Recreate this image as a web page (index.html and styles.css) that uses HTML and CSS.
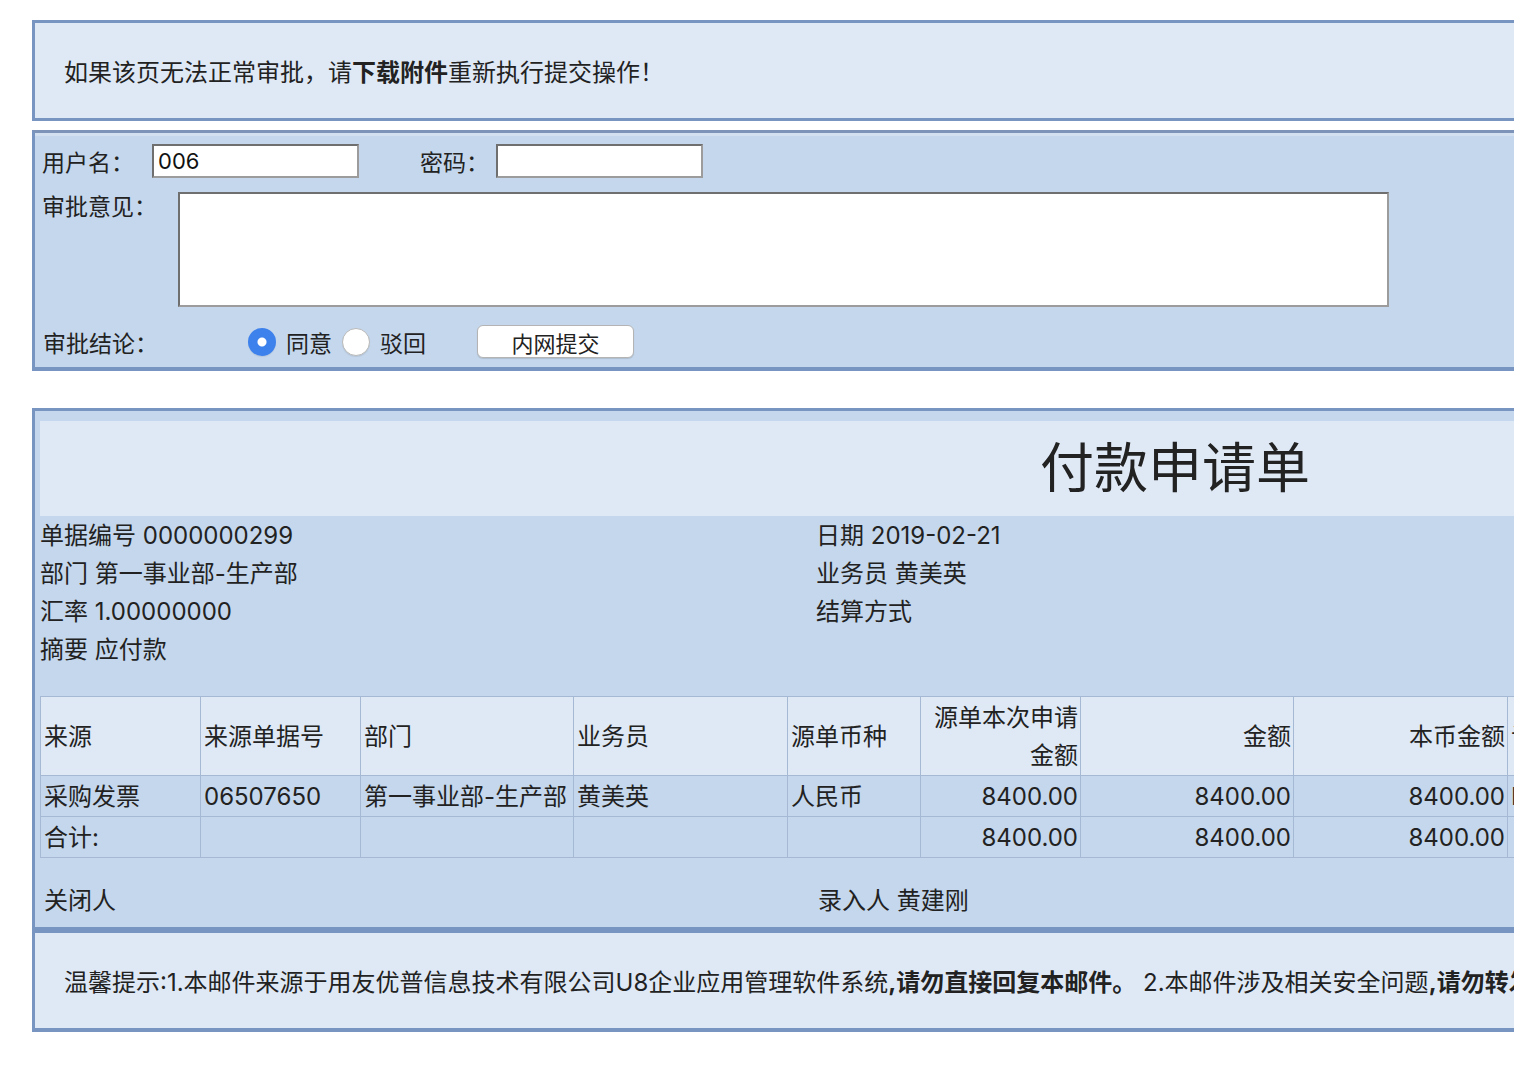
FILE: index.html
```html
<!DOCTYPE html>
<html lang="zh-CN">
<head>
<meta charset="utf-8">
<title>付款申请单</title>
<link rel="stylesheet" href="styles.css">
</head>
<body>
<div class="page">
  <div class="box notice">如果该页无法正常审批，请<b>下载附件</b>重新执行提交操作！</div>

  <div class="box form">
    <div class="row r1">
      <span class="lbl lbl-user">用户名：</span>
      <input class="inp" type="text" value="006">
      <span class="lbl lbl-pw">密码：</span>
      <input class="inp" type="password" value="">
    </div>
    <div class="row r2">
      <span class="lbl lbl-op">审批意见：</span>
      <textarea class="opinion"></textarea>
    </div>
    <div class="row r3">
      <span class="lbl lbl-res">审批结论：</span>
      <input class="radio" type="radio" name="res" checked>
      <span class="rtext">同意</span>
      <input class="radio" type="radio" name="res">
      <span class="rtext">驳回</span>
      <button class="btn" type="button">内网提交</button>
    </div>
  </div>

  <div class="box bill">
    <div class="title">付款申请单</div>
    <div class="info">
      <div>单据编号 0000000299</div><div>日期 2019-02-21</div>
      <div>部门 第一事业部-生产部</div><div>业务员 黄美英</div>
      <div>汇率 1.00000000</div><div>结算方式</div>
      <div>摘要 应付款</div><div></div>
    </div>
    <table class="grid">
      <colgroup>
        <col style="width:160px"><col style="width:160px"><col style="width:213px"><col style="width:214px">
        <col style="width:133px"><col style="width:160px"><col style="width:213px"><col style="width:214px">
        <col style="width:200px"><col style="width:200px">
      </colgroup>
      <thead>
        <tr>
          <th>来源</th><th>来源单据号</th><th>部门</th><th>业务员</th><th>源单币种</th>
          <th class="num">源单本次申请金额</th><th class="num">金额</th><th class="num">本币金额</th>
          <th>订单号</th><th>项目</th>
        </tr>
      </thead>
      <tbody>
        <tr>
          <td>采购发票</td><td>06507650</td><td>第一事业部-生产部</td><td>黄美英</td><td>人民币</td>
          <td class="num">8400.00</td><td class="num">8400.00</td><td class="num">8400.00</td>
          <td>P0000123</td><td></td>
        </tr>
        <tr>
          <td>合计:</td><td></td><td></td><td></td><td></td>
          <td class="num">8400.00</td><td class="num">8400.00</td><td class="num">8400.00</td>
          <td></td><td></td>
        </tr>
      </tbody>
    </table>
    <div class="info info-foot">
      <div>关闭人</div><div>录入人 黄建刚</div>
    </div>
  </div>

  <div class="box tip">温馨提示:1.本邮件来源于用友优普信息技术有限公司U8企业应用管理软件系统<b>,请勿直接回复本邮件。</b>&nbsp;2.本邮件涉及相关安全问题<b>,请勿转发本邮件。</b></div>
</div>
</body>
</html>
```

FILE: styles.css
```css
html {
  overflow: hidden;
}

body {
  margin: 0;
  background: #ffffff;
  color: #222222;
  font-family: "Inter", "Noto Sans CJK SC", sans-serif;
}

.page {
  padding: 20px 0 0 32px;
  width: 2286px;
}

.box {
  box-sizing: border-box;
  width: 2286px;
  border: 3px solid #7894c0;
}

/* notice */
.notice {
  height: 101px;
  background: #dfe9f6;
  display: flex;
  align-items: center;
  padding-left: 29px;
  font-size: 24px;
  white-space: nowrap;
}

/* login / approval form */
.form {
  margin-top: 9px;
  background: #c5d7ec;
  border-bottom-width: 4px;
  border-top-color: #7d94b8;
  padding: 11px 0 9px 7px;
  font-size: 23px;
  box-shadow: inset 0 3px 0 #d3e0f0;
}

.row {
  display: flex;
  align-items: center;
}

.r1 {
  height: 34px;
}

.lbl {
  flex: none;
  white-space: nowrap;
}

.lbl-user {
  width: 110px;
}

.lbl-pw {
  width: 76px;
  margin-left: 61px;
}

.inp {
  box-sizing: border-box;
  width: 207px;
  height: 34px;
  margin: 0;
  padding: 0 4px;
  border: 2px solid;
  border-color: #6f6f6f #9c9c9c #9c9c9c #6f6f6f;
  background: #ffffff;
  font-family: "Inter", "Noto Sans CJK SC", sans-serif;
  font-size: 22px;
  color: #111111;
}

.r2 {
  margin-top: 14px;
  align-items: flex-start;
}

.lbl-op {
  width: 136px;
  line-height: 30px;
}

.opinion {
  box-sizing: border-box;
  width: 1211px;
  height: 115px;
  margin: 0;
  border: 2px solid;
  border-color: #6f6f6f #9c9c9c #9c9c9c #6f6f6f;
  background: #ffffff;
  resize: none;
}

.r3 {
  margin-top: 18px;
  height: 33px;
}

.lbl-res {
  box-sizing: border-box;
  width: 206px;
  padding-left: 1px;
  padding-top: 1px;
}

.radio {
  appearance: none;
  -webkit-appearance: none;
  flex: none;
  box-sizing: border-box;
  width: 28px;
  height: 28px;
  margin: 0;
  border-radius: 50%;
  border: 1px solid #b9b9b9;
  background: #ffffff;
  box-shadow: 0 1px 1px rgba(0, 0, 0, 0.08);
}

.radio:checked {
  border: none;
  background: radial-gradient(circle, #ffffff 0 4px, #3d81ec 5px);
}

.rtext {
  margin: 0 10px;
}

.r3 .rtext:last-of-type {
  margin-right: 0;
}

.btn {
  flex: none;
  width: 157px;
  height: 33px;
  margin-left: 51px;
  padding: 0;
  border: 1px solid #b4b4b4;
  border-radius: 6px;
  background: #ffffff;
  box-shadow: 0 1px 1px rgba(0, 0, 0, 0.12);
  font-family: "Inter", "Noto Sans CJK SC", sans-serif;
  font-size: 22px;
  color: #222222;
}

/* bill */
.bill {
  margin-top: 37px;
  background: #c5d7ec;
  padding: 10px 5px 8px 5px;
  font-size: 24px;
}

.title {
  height: 95px;
  background: #dfe9f6;
  text-align: center;
  font-size: 54px;
  line-height: 95px;
  white-space: nowrap;
}

.info {
  display: grid;
  grid-template-columns: 776px 1fr;
  line-height: 38px;
  padding-top: 1px;
  margin-bottom: -1px;
  white-space: nowrap;
}

.info-foot {
  margin-top: 23px;
  padding-left: 4px;
  grid-template-columns: 774px 1fr;
}

.grid {
  margin-top: 28px;
  border-collapse: collapse;
  table-layout: fixed;
  width: 1867px;
}

.grid th,
.grid td {
  border: 1px solid #a5b8d4;
  padding: 2px 3px 0 3px;
  line-height: 38px;
  font-weight: normal;
  text-align: left;
  vertical-align: middle;
  overflow: hidden;
}

.grid td {
  white-space: nowrap;
}

.grid thead th {
  background: #dfe9f6;
}

.grid .num {
  text-align: right;
  padding-right: 2px;
}

/* tip */
.tip {
  height: 102px;
  border-bottom-width: 4px;
  background: #dfe9f6;
  display: flex;
  align-items: center;
  padding-left: 29px;
  font-size: 24px;
  white-space: nowrap;
}
```
